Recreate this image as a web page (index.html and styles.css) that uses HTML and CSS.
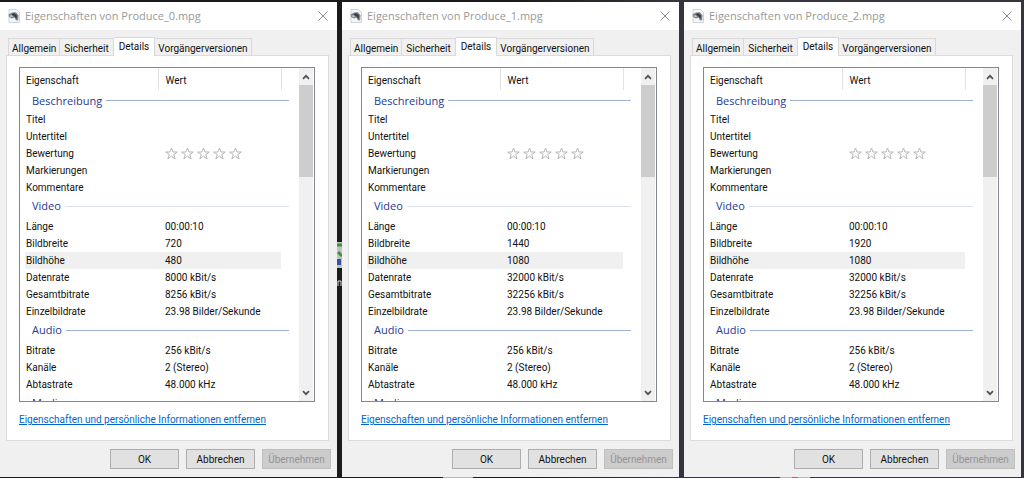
FILE: index.html
```html
<!DOCTYPE html>
<html lang="de">
<head>
<meta charset="utf-8">
<meta name="viewport" content="width=device-width, initial-scale=1">
<title>Eigenschaften</title>
<link rel="stylesheet" href="styles.css">
</head>
<body>
<svg class="defs" aria-hidden="true">
  <symbol id="file" viewBox="0 0 12 14">
    <path d="M1 .5h7.500l3 3v10H1z" fill="#f4f6f8" stroke="#c3cad0" stroke-width=".8"/>
    <path d="M.5 5.500 4 3.500l4-.3 2.500 3-.3 5L8 11.500 6.500 8.500 4 9.500 1 8z" fill="#7b858e"/>
    <path d="M3.500 5.500 6 4l3 2.500-.5 3.500L6 7z" fill="#343b43"/>
    <path d="M1.500 6.500 4 6.200 5 8 2.500 8z" fill="#b9c5cf"/>
  </symbol>
  <symbol id="close" viewBox="0 0 10 10"><path d="M.5.500l9 9M9.500.500l-9 9" fill="none" stroke="#8c8c8c"/></symbol>
  <symbol id="up" viewBox="0 0 8 6"><path d="M1 4.800 4 1.800l3 3" fill="none" stroke="#505050" stroke-width="1.700"/></symbol>
  <symbol id="down" viewBox="0 0 8 6"><path d="M1 1.200l3 3 3-3" fill="none" stroke="#505050" stroke-width="1.700"/></symbol>
  <symbol id="stars" viewBox="0 0 78 13">
    <g fill="none" stroke="#b0b0b0" stroke-width=".9">
      <path id="star" d="M6.500 1 8 5h4.300L8.800 7.500l1.300 4.300-3.600-2.600-3.600 2.600 1.300-4.300L.7 5H5z"/>
      <use href="#star" x="16"/><use href="#star" x="32"/><use href="#star" x="48"/><use href="#star" x="64"/>
    </g>
  </symbol>
</svg>
<main class="desktop">
  <section class="window">
    <header class="titlebar"><svg class="file"><use href="#file"/></svg><h1 class="title">Eigenschaften von Produce_0.mpg</h1><button class="close" aria-label="Schließen"><svg class="cross"><use href="#close"/></svg></button></header>
    <nav class="tabs" role="tablist"><button class="tab" role="tab">Allgemein</button><button class="tab" role="tab">Sicherheit</button><button class="tab selected" role="tab" aria-selected="true">Details</button><button class="tab" role="tab">Vorgängerversionen</button></nav>
    <div class="panel">
      <div class="list">
        <div class="viewport">
          <table class="properties">
            <colgroup><col class="name"><col class="value"><col class="edge"></colgroup>
            <thead><tr><th>Eigenschaft</th><th>Wert</th><th></th></tr></thead>
            <tbody>
              <tr class="group"><th colspan="3"><span class="caption">Beschreibung</span></th></tr>
              <tr><td>Titel</td><td></td></tr>
              <tr><td>Untertitel</td><td></td></tr>
              <tr><td>Bewertung</td><td><svg class="stars"><use href="#stars"/></svg></td></tr>
              <tr><td>Markierungen</td><td></td></tr>
              <tr><td>Kommentare</td><td></td></tr>
            </tbody>
            <tbody>
              <tr class="group pale"><th colspan="3"><span class="caption">Video</span></th></tr>
              <tr><td>Länge</td><td>00:00:10</td></tr>
              <tr><td>Bildbreite</td><td>720</td></tr>
              <tr class="active"><td>Bildhöhe</td><td>480</td></tr>
              <tr><td>Datenrate</td><td>8000 kBit/s</td></tr>
              <tr><td>Gesamtbitrate</td><td>8256 kBit/s</td></tr>
              <tr><td>Einzelbildrate</td><td>23.98 Bilder/Sekunde</td></tr>
            </tbody>
            <tbody>
              <tr class="group"><th colspan="3"><span class="caption">Audio</span></th></tr>
              <tr><td>Bitrate</td><td>256 kBit/s</td></tr>
              <tr><td>Kanäle</td><td>2 (Stereo)</td></tr>
              <tr><td>Abtastrate</td><td>48.000 kHz</td></tr>
            </tbody>
            <tbody><tr class="group pale"><th colspan="3"><span class="caption">Medien</span></th></tr></tbody>
          </table>
        </div>
        <div class="scrollbar"><button class="arrow" aria-label="Nach oben"><svg class="chevron"><use href="#up"/></svg></button><div class="thumb"></div><button class="arrow last" aria-label="Nach unten"><svg class="chevron"><use href="#down"/></svg></button></div>
      </div>
      <a class="remove" href="#">Eigenschaften und persönliche Informationen entfernen</a>
    </div>
    <footer class="actions"><button class="action">OK</button><button class="action">Abbrechen</button><button class="action" disabled>Übernehmen</button></footer>
  </section>

  <section class="window">
    <header class="titlebar"><svg class="file"><use href="#file"/></svg><h1 class="title">Eigenschaften von Produce_1.mpg</h1><button class="close" aria-label="Schließen"><svg class="cross"><use href="#close"/></svg></button></header>
    <nav class="tabs" role="tablist"><button class="tab" role="tab">Allgemein</button><button class="tab" role="tab">Sicherheit</button><button class="tab selected" role="tab" aria-selected="true">Details</button><button class="tab" role="tab">Vorgängerversionen</button></nav>
    <div class="panel">
      <div class="list">
        <div class="viewport">
          <table class="properties">
            <colgroup><col class="name"><col class="value"><col class="edge"></colgroup>
            <thead><tr><th>Eigenschaft</th><th>Wert</th><th></th></tr></thead>
            <tbody>
              <tr class="group"><th colspan="3"><span class="caption">Beschreibung</span></th></tr>
              <tr><td>Titel</td><td></td></tr>
              <tr><td>Untertitel</td><td></td></tr>
              <tr><td>Bewertung</td><td><svg class="stars"><use href="#stars"/></svg></td></tr>
              <tr><td>Markierungen</td><td></td></tr>
              <tr><td>Kommentare</td><td></td></tr>
            </tbody>
            <tbody>
              <tr class="group pale"><th colspan="3"><span class="caption">Video</span></th></tr>
              <tr><td>Länge</td><td>00:00:10</td></tr>
              <tr><td>Bildbreite</td><td>1440</td></tr>
              <tr class="active"><td>Bildhöhe</td><td>1080</td></tr>
              <tr><td>Datenrate</td><td>32000 kBit/s</td></tr>
              <tr><td>Gesamtbitrate</td><td>32256 kBit/s</td></tr>
              <tr><td>Einzelbildrate</td><td>23.98 Bilder/Sekunde</td></tr>
            </tbody>
            <tbody>
              <tr class="group"><th colspan="3"><span class="caption">Audio</span></th></tr>
              <tr><td>Bitrate</td><td>256 kBit/s</td></tr>
              <tr><td>Kanäle</td><td>2 (Stereo)</td></tr>
              <tr><td>Abtastrate</td><td>48.000 kHz</td></tr>
            </tbody>
            <tbody><tr class="group pale"><th colspan="3"><span class="caption">Medien</span></th></tr></tbody>
          </table>
        </div>
        <div class="scrollbar"><button class="arrow" aria-label="Nach oben"><svg class="chevron"><use href="#up"/></svg></button><div class="thumb"></div><button class="arrow last" aria-label="Nach unten"><svg class="chevron"><use href="#down"/></svg></button></div>
      </div>
      <a class="remove" href="#">Eigenschaften und persönliche Informationen entfernen</a>
    </div>
    <footer class="actions"><button class="action">OK</button><button class="action">Abbrechen</button><button class="action" disabled>Übernehmen</button></footer>
  </section>

  <section class="window">
    <header class="titlebar"><svg class="file"><use href="#file"/></svg><h1 class="title">Eigenschaften von Produce_2.mpg</h1><button class="close" aria-label="Schließen"><svg class="cross"><use href="#close"/></svg></button></header>
    <nav class="tabs" role="tablist"><button class="tab" role="tab">Allgemein</button><button class="tab" role="tab">Sicherheit</button><button class="tab selected" role="tab" aria-selected="true">Details</button><button class="tab" role="tab">Vorgängerversionen</button></nav>
    <div class="panel">
      <div class="list">
        <div class="viewport">
          <table class="properties">
            <colgroup><col class="name"><col class="value"><col class="edge"></colgroup>
            <thead><tr><th>Eigenschaft</th><th>Wert</th><th></th></tr></thead>
            <tbody>
              <tr class="group"><th colspan="3"><span class="caption">Beschreibung</span></th></tr>
              <tr><td>Titel</td><td></td></tr>
              <tr><td>Untertitel</td><td></td></tr>
              <tr><td>Bewertung</td><td><svg class="stars"><use href="#stars"/></svg></td></tr>
              <tr><td>Markierungen</td><td></td></tr>
              <tr><td>Kommentare</td><td></td></tr>
            </tbody>
            <tbody>
              <tr class="group pale"><th colspan="3"><span class="caption">Video</span></th></tr>
              <tr><td>Länge</td><td>00:00:10</td></tr>
              <tr><td>Bildbreite</td><td>1920</td></tr>
              <tr class="active"><td>Bildhöhe</td><td>1080</td></tr>
              <tr><td>Datenrate</td><td>32000 kBit/s</td></tr>
              <tr><td>Gesamtbitrate</td><td>32256 kBit/s</td></tr>
              <tr><td>Einzelbildrate</td><td>23.98 Bilder/Sekunde</td></tr>
            </tbody>
            <tbody>
              <tr class="group"><th colspan="3"><span class="caption">Audio</span></th></tr>
              <tr><td>Bitrate</td><td>256 kBit/s</td></tr>
              <tr><td>Kanäle</td><td>2 (Stereo)</td></tr>
              <tr><td>Abtastrate</td><td>48.000 kHz</td></tr>
            </tbody>
            <tbody><tr class="group pale"><th colspan="3"><span class="caption">Medien</span></th></tr></tbody>
          </table>
        </div>
        <div class="scrollbar"><button class="arrow" aria-label="Nach oben"><svg class="chevron"><use href="#up"/></svg></button><div class="thumb"></div><button class="arrow last" aria-label="Nach unten"><svg class="chevron"><use href="#down"/></svg></button></div>
      </div>
      <a class="remove" href="#">Eigenschaften und persönliche Informationen entfernen</a>
    </div>
    <footer class="actions"><button class="action">OK</button><button class="action">Abbrechen</button><button class="action" disabled>Übernehmen</button></footer>
  </section>
  <svg class="shortcut" viewBox="0 0 5 60" aria-hidden="true">
    <path d="M0 0h5v26H0z" fill="#b9c6bd"/><path d="M0 3h5M1 10l4 4" stroke="#4c8a3c" stroke-width="3"/><path d="M0 17h4v6H0z" fill="#3553a0"/><path d="M1 44v-5h3v5" fill="none" stroke="#ddd"/>
  </svg>
  <span class="taskicon"></span>
  <span class="taskicon marked"></span>
</main>
</body>
</html>
```

FILE: styles.css
```css
* { box-sizing: border-box; }
body {
  margin: 0;
  background: #222126;
  color: #111;
  font: 10px/17px Roboto, "Liberation Sans", sans-serif;
}
button { font: inherit; color: inherit; padding: 0; margin: 0; border: 0; background: none; }
svg { display: block; }
.defs { position: absolute; width: 0; height: 0; }

.desktop {
  position: relative;
  display: grid;
  grid-template-columns: repeat(3, 1fr);
  gap: 5px;
  min-height: 100vh;
  padding: 2px 3px 1px 0;
  background: linear-gradient(90deg, #1b1b1d 50%, #37343d 66%, #37343d);
}
.shortcut { position: absolute; left: calc((100% - 13px) / 3); top: 242px; width: 5px; height: 60px; }
.taskicon { position: absolute; left: 443px; bottom: 0; width: 30px; height: 1px; background: #b8b8b8; }
.taskicon.marked { left: 780px; background: linear-gradient(90deg, #b8b8b8 40%, #b8606c 40% 60%, #b8b8b8 60%); }

.window { display: flex; flex-direction: column; min-width: 0; background: #f0f0f0; }
.titlebar { display: flex; align-items: center; height: 28px; padding: 0 9px 0 8px; background: #fff; }
.file { width: 12px; height: 14px; }
.title { flex: 1; margin: 0 0 0 5px; font: 11px/16px "Open Sans", "Noto Sans", sans-serif; color: #999; white-space: nowrap; }
.close { width: 10px; height: 10px; }
.cross { width: 10px; height: 10px; }

.tabs { display: flex; align-items: flex-end; padding: 7px 8px 0; }
.tab { height: 17px; padding: 1px 3px 0; border: 1px solid #d9d9d9; border-left-width: 0; border-bottom: 0; white-space: nowrap; }
.tab:first-child { border-left-width: 1px; }
.tab:nth-child(2) { padding: 1px 4px 0; }
.tab.selected { height: 19px; padding: 0 5px 1px; margin-bottom: -1px; background: #fff; z-index: 1; }

.panel { flex: 1; margin: 0 8px 0 6px; padding: 11px 13px 12px 12px; border: 1px solid #dcdcdc; background: #fff; }
.list { display: flex; height: 335px; padding-right: 1px; border: 1px solid #828790; }
.viewport { flex: 1; min-width: 0; padding: 0 10px 0 5px; overflow: hidden; }
.properties { width: 100%; table-layout: fixed; border-collapse: collapse; }
.name { width: auto; }
.value { width: 123px; }
.edge { width: 8px; }
.properties th, .properties td { height: 17px; padding: 0 0 0 1px; text-align: left; font-weight: normal; white-space: nowrap; }
.properties th:nth-child(2), .properties td:nth-child(2) { padding-left: 7px; }
.properties thead th { height: 22px; padding-top: 4px; line-height: 18px; }
.properties thead th:nth-child(-n+2) { border-right: 1px solid #e2e2e2; }
.properties .group th { height: 22px; padding: 0 0 2px 7px; }
.properties tbody:nth-of-type(1) .group th { height: 21px; padding-bottom: 0; }
.caption { display: flex; align-items: center; gap: 4px; font: 11px/20px "Open Sans", "Noto Sans", sans-serif; color: #1f3a93; }
.caption::after { content: ""; flex: 1; height: 1px; background: #9fb0d3; }
.pale .caption::after { background: #dbe0ea; }
.active td { background: #f0f0f0; }
.stars { width: 78px; height: 13px; }

.scrollbar { display: flex; flex-direction: column; width: 14px; background: #f0f0f0; }
.arrow { display: grid; place-items: center; height: 17px; }
.arrow.last { margin-top: auto; }
.chevron { width: 8px; height: 6px; }
.thumb { height: 92px; background: #cdcdcd; }

.remove { display: block; width: max-content; margin-top: 9px; color: #0066cc; }

.actions { display: flex; justify-content: flex-end; gap: 7px; padding: 8px 6px 8px 0; }
.action { width: 69px; height: 20px; border: 1px solid #adadad; background: #e1e1e1; }
.action:disabled { border-color: #bfbfbf; background: #ccc; color: #949494; }
```
